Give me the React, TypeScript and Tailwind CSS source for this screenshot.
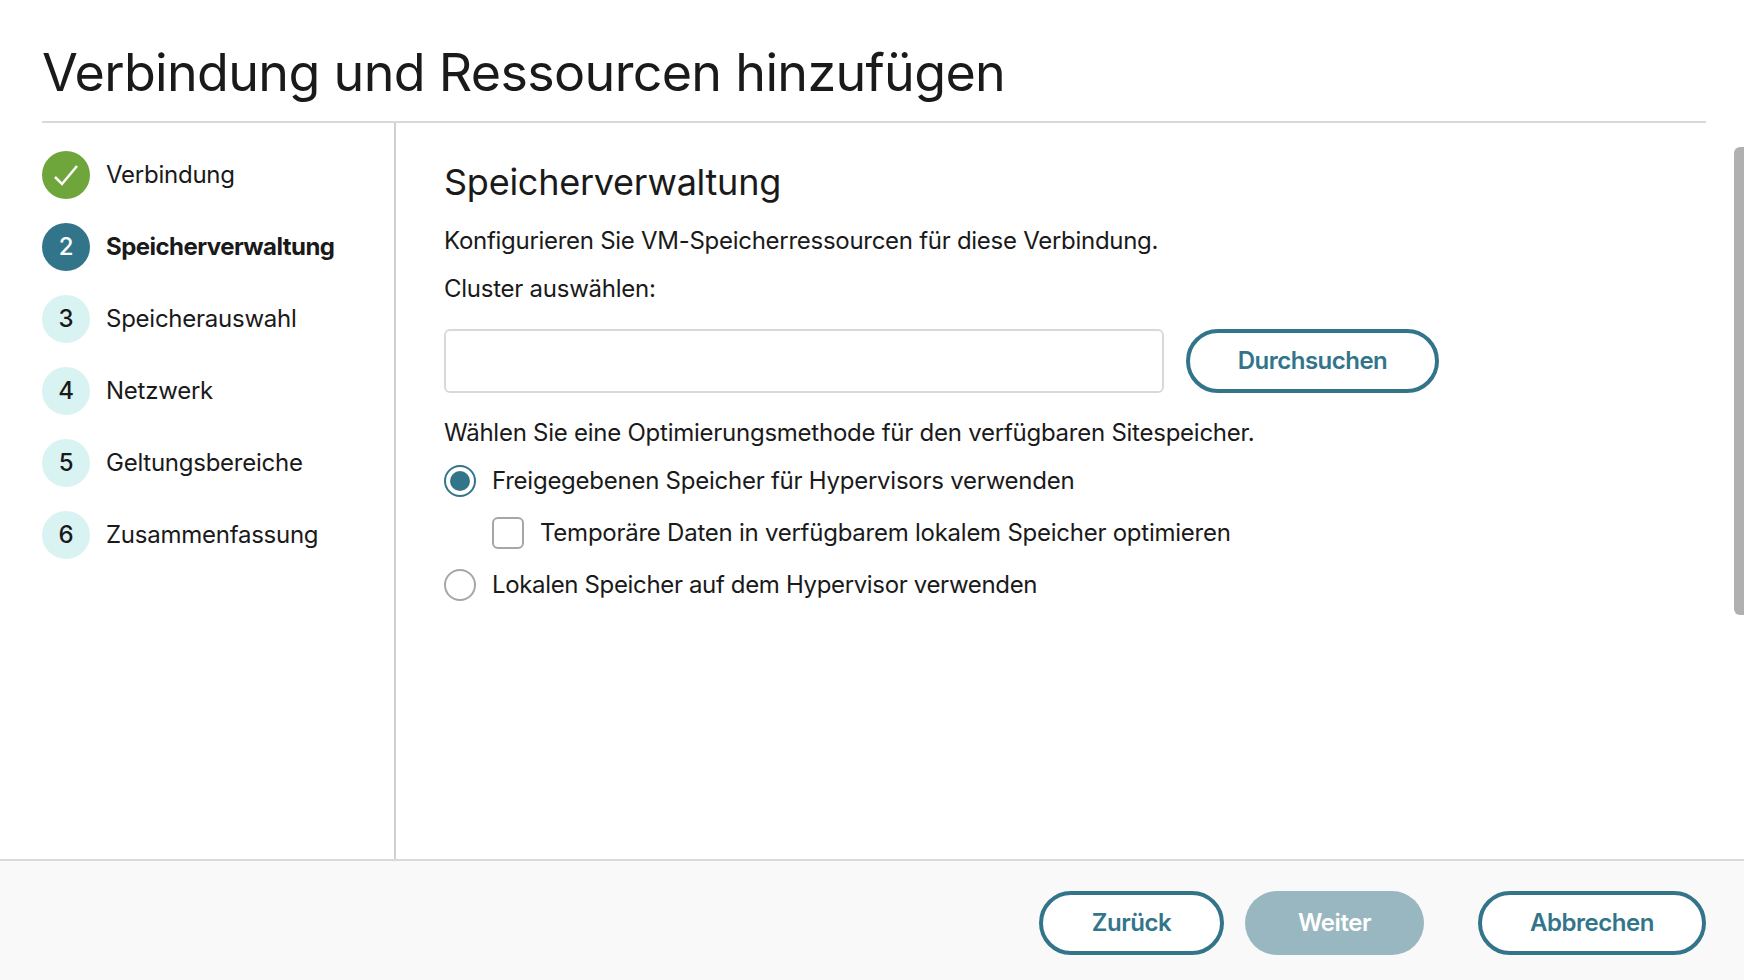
const steps = [
  { label: "Speicherauswahl", num: 3 },
  { label: "Netzwerk", num: 4 },
  { label: "Geltungsbereiche", num: 5 },
  { label: "Zusammenfassung", num: 6 },
]

function Radio({ checked }: { checked?: boolean }) {
  if (checked) {
    return (
      <span className="flex h-8 w-8 shrink-0 items-center justify-center rounded-full border-2 border-[#32758a] bg-white">
        <span className="h-5 w-5 rounded-full bg-[#32758a]" />
      </span>
    )
  }
  return <span className="h-8 w-8 shrink-0 rounded-full border-2 border-[#a6a6a6] bg-white" />
}

export default function App() {
  return (
    <div className="relative flex h-[980px] w-[1744px] flex-col overflow-hidden bg-white font-['Inter',sans-serif] text-[24px] tracking-[-0.25px] text-[#1a1a1a]">
      {/* Title */}
      <div className="mr-[38px] ml-[42px] h-[123px] border-b-2 border-[#d9d9d9] pt-[38px]">
        <h1 className="text-[52px] leading-[70px] font-normal tracking-[-0.67px]">Verbindung und Ressourcen hinzufügen</h1>
      </div>

      <div className="flex flex-1">
        {/* Steps */}
        <div className="ml-[42px] flex w-[354px] flex-col gap-6 border-r-2 border-[#d0d0d0] pt-[28px]">
          <div className="flex items-center gap-4">
            <span className="flex h-12 w-12 items-center justify-center rounded-full bg-[#6fa63b]">
              <svg width="26" height="22" viewBox="0 0 26 22" fill="none">
                <path d="M2 13l7 7L24 2" stroke="#fff" strokeWidth="2.5" />
              </svg>
            </span>
            <span>Verbindung</span>
          </div>
          <div className="flex items-center gap-4">
            <span className="flex h-12 w-12 items-center justify-center rounded-full bg-[#32758a] font-medium text-white">2</span>
            <span className="font-bold tracking-[-0.55px]">Speicherverwaltung</span>
          </div>
          {steps.map((step) => (
            <div key={step.num} className="flex items-center gap-4">
              <span className="flex h-12 w-12 items-center justify-center rounded-full bg-[#d9f3f2] font-medium">{step.num}</span>
              <span>{step.label}</span>
            </div>
          ))}
        </div>

        {/* Content */}
        <div className="flex-1 pl-12 pt-[35px]">
          <h2 className="text-[36px] leading-[48px] font-normal">Speicherverwaltung</h2>
          <p className="mt-[19px] leading-8 tracking-[-0.28px]">Konfigurieren Sie VM-Speicherressourcen für diese Verbindung.</p>
          <p className="mt-4 leading-8">Cluster auswählen:</p>
          <div className="mt-6 flex gap-[22px]">
            <div className="h-16 w-[720px] rounded-md border-2 border-[#d9d9d9] bg-white" />
            <button className="h-16 w-[253px] rounded-full border-4 border-[#32758a] font-semibold tracking-[-0.5px] text-[#32758a]">
              Durchsuchen
            </button>
          </div>
          <p className="mt-6 leading-8">Wählen Sie eine Optimierungsmethode für den verfügbaren Sitespeicher.</p>
          <div className="mt-[14px] flex flex-col gap-4">
            <div className="flex items-center gap-4">
              <Radio checked />
              <span>Freigegebenen Speicher für Hypervisors verwenden</span>
            </div>
            <div className="ml-12 flex items-center gap-4">
              <span className="h-8 w-8 shrink-0 rounded-md border-2 border-[#a6a6a6] bg-white" />
              <span>Temporäre Daten in verfügbarem lokalem Speicher optimieren</span>
            </div>
            <div className="flex items-center gap-4">
              <Radio />
              <span className="tracking-[-0.35px]">Lokalen Speicher auf dem Hypervisor verwenden</span>
            </div>
          </div>
        </div>
      </div>

      {/* Footer */}
      <div className="flex h-[121px] items-center justify-end border-t-2 border-[#d9d9d9] bg-[#f9f9f9] pt-[5px] pr-[38px] font-semibold tracking-[-0.45px]">
        <button className="h-16 w-[185px] rounded-full border-4 border-[#32758a] bg-white text-[#32758a]">Zurück</button>
        <button className="ml-[21px] h-16 w-[179px] rounded-full bg-[#99b7c0] text-white">Weiter</button>
        <button className="ml-[54px] h-16 w-[228px] rounded-full border-4 border-[#32758a] bg-white text-[#32758a]">Abbrechen</button>
      </div>

      {/* Scrollbar */}
      <div className="absolute right-0 top-[147px] h-[468px] w-[10px] rounded-l-md bg-[#b0b0b0]" />
    </div>
  )
}
